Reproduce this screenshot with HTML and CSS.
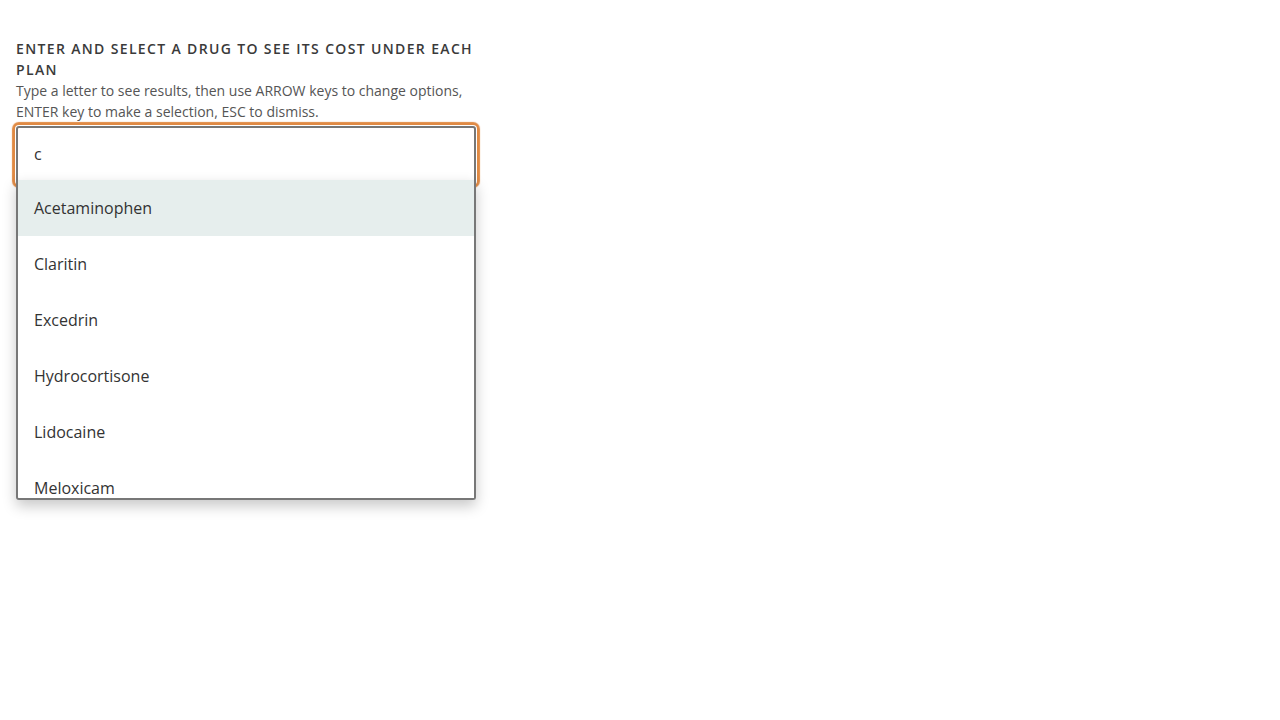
FILE: index.html
```html
<!DOCTYPE html>
<html lang="en">
<head>
<meta charset="utf-8">
<title>Drug cost lookup</title>
<link rel="stylesheet" href="styles.css">
</head>
<body>
<div class="page">
  <div class="field">
    <label class="label" for="drug">Enter and select a drug to see its cost under each plan</label>
    <p class="hint">Type a letter to see results, then use ARROW keys to change options, ENTER key to make a selection, ESC to dismiss.</p>
    <div class="combo">
      <input id="drug" class="input" type="text" value="c">
      <ul class="listbox">
        <li class="option active">Acetaminophen</li>
        <li class="option">Claritin</li>
        <li class="option">Excedrin</li>
        <li class="option">Hydrocortisone</li>
        <li class="option">Lidocaine</li>
        <li class="option">Meloxicam</li>
      </ul>
    </div>
  </div>
</div>
</body>
</html>
```
FILE: styles.css
```css
html, body {
  margin: 0;
  padding: 0;
  background: #fff;
}
.page {
  box-sizing: border-box;
  min-height: 720px;
  padding: 38px 16px 0;
  font-family: "Open Sans", "Liberation Sans", sans-serif;
}
.field {
  width: 460px;
}
.label {
  display: block;
  font-family: "Open Sans", "Liberation Sans", sans-serif;
  font-weight: 600;
  font-size: 14px;
  line-height: 21px;
  letter-spacing: 1.35px;
  text-transform: uppercase;
  color: #3a3a3a;
}
.hint {
  margin: 0 0 4px;
  font-size: 14px;
  line-height: 21px;
  color: #555;
}
.combo {
  position: relative;
  height: 374px;
}
.input {
  box-sizing: border-box;
  display: block;
  width: 460px;
  height: 58px;
  margin: 0;
  padding: 0 16px 2px;
  border: 2px solid #777;
  border-radius: 3px;
  font-family: "Open Sans", "Liberation Sans", sans-serif;
  font-size: 16px;
  color: #333;
  outline: none;
  box-shadow: 0 0 0 1px #fff, 0 0 1px 4px #e08a44;
}
.listbox {
  position: absolute;
  left: 0;
  top: 54px;
  box-sizing: border-box;
  width: 460px;
  height: 320px;
  margin: 0;
  padding: 0;
  list-style: none;
  overflow: hidden;
  background: #fff;
  border: 2px solid #777;
  border-top: 0;
  border-radius: 0 0 3px 3px;
  box-shadow: 0 6px 14px rgba(0, 0, 0, 0.22);
}
.option {
  height: 56px;
  line-height: 56px;
  padding-left: 16px;
  font-size: 16px;
  color: #333;
}
.option.active {
  background: #e6eeed;
}
```
